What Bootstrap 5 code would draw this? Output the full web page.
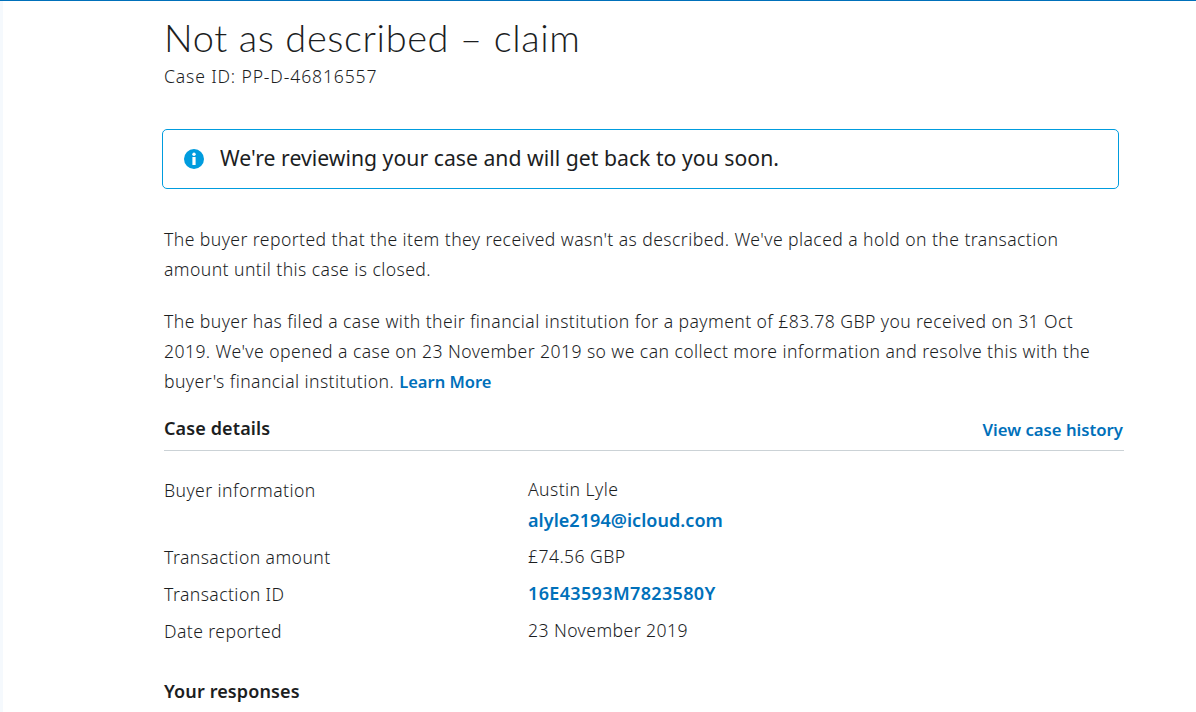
<!doctype html>
<html lang="en">
<head>
<meta charset="utf-8">
<title>Case</title>
<link href="https://cdn.jsdelivr.net/npm/bootstrap@5.3.0/dist/css/bootstrap.min.css" rel="stylesheet">
<style>
html,body{height:712px;overflow:hidden}
body{font-family:"Noto Sans","Liberation Sans",sans-serif;font-weight:300;color:#1c1e1f;background:#fff;font-size:17.6px;line-height:30px;letter-spacing:.42px;border-top:1px solid #0070ba}
.edge-strip{width:3px;background:#f5f9fd;flex:none}
.page-col{width:960px;margin-left:161px;padding-bottom:40px}
.case-title{font-size:38px;font-weight:300;line-height:46px;margin:13px 0 0;font-family:"Lato","Noto Sans",sans-serif;letter-spacing:.6px}
.case-id{font-size:17.6px;line-height:24px;margin:4px 0 0;letter-spacing:.85px}
.status-box{width:957px;height:60px;margin:41px 0 35px -2px;border:1px solid #009cde;border-radius:5px;padding:0 0 2px 21px;gap:16px;font-size:21.2px;font-weight:400;letter-spacing:.02px}
.status-box svg{margin-top:2px}
.para{margin:0 0 22px;width:930px}
.blue-link{color:#0070ba;font-weight:600;text-decoration:none;font-size:16.5px;letter-spacing:0}
.blue-large{font-size:18px;letter-spacing:.05px}
.blue-id{letter-spacing:.35px}
.history-link{font-size:16.7px;margin:4px 1px 0 0}
.email-line{margin-top:1px}
.detail-head{border-bottom:1px solid #cbd2d6;height:46px;margin-top:-14px}
.detail-head strong,.resp{font-weight:600;font-size:18px;letter-spacing:.12px}
.detail-list{margin-top:24px}
.lbl{width:364px;flex:none}
.val{margin-top:-1px}
.detail-row{margin-bottom:7px}
.resp{margin-top:30px}
</style>
</head>
<body>
<div class="d-flex">
<div class="edge-strip"></div>
<main class="page-col">
<h1 class="case-title">Not as described – claim</h1>
<p class="case-id">Case ID: PP-D-46816557</p>
<div class="status-box d-flex align-items-center">
<svg width="20" height="20" viewBox="0 0 20 20" aria-hidden="true"><circle cx="10" cy="10" r="10" fill="#009cde"/><circle cx="10" cy="5.2" r="1.7" fill="#fff"/><rect x="8.4" y="8" width="3.2" height="8" fill="#fff"/></svg>
<span>We're reviewing your case and will get back to you soon.</span>
</div>
<p class="para">The buyer reported that the item they received wasn't as described. We've placed a hold on the transaction amount until this case is closed.</p>
<p class="para">The buyer has filed a case with their financial institution for a payment of £83.78 GBP you received on 31 Oct 2019. We've opened a case on 23 November 2019 so we can collect more information and resolve this with the buyer's financial institution. <a class="blue-link" href="#">Learn More</a></p>
<div class="detail-head d-flex justify-content-between align-items-center">
<strong>Case details</strong>
<a class="blue-link history-link" href="#">View case history</a>
</div>
<div class="detail-list">
<div class="detail-row d-flex"><div class="lbl">Buyer information</div><div class="val"><div>Austin Lyle</div><div class="email-line"><a class="blue-link blue-large" href="#">alyle2194@icloud.com</a></div></div></div>
<div class="detail-row d-flex"><div class="lbl">Transaction amount</div><div class="val">£74.56 GBP</div></div>
<div class="detail-row d-flex"><div class="lbl">Transaction ID</div><div class="val"><a class="blue-link blue-large blue-id" href="#">16E43593M7823580Y</a></div></div>
<div class="detail-row d-flex"><div class="lbl">Date reported</div><div class="val">23 November 2019</div></div>
</div>
<div class="resp">Your responses</div>
</main>
</div>
</body>
</html>
